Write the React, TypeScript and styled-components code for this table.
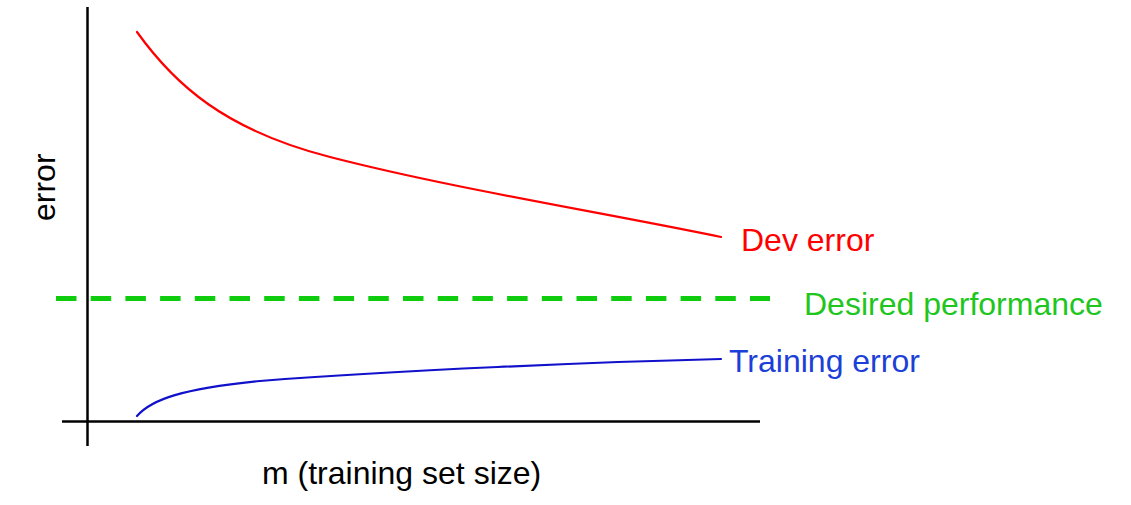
import styled, { createGlobalStyle } from "styled-components";

const GlobalStyle = createGlobalStyle`
  html, body {
    margin: 0;
    padding: 0;
    background: #ffffff;
  }
  body {
    font-family: "Liberation Sans", Arial, sans-serif;
  }
`;

const Page = styled.div`
  width: 1131px;
  height: 505px;
  background: #ffffff;
  overflow: hidden;
`;

const Chart = styled.svg`
  display: block;
  width: 1131px;
  height: 505px;
`;

const Axis = styled.line`
  stroke: #000000;
  stroke-width: 2.5;
`;

const Curve = styled.path<{ tone: string }>`
  fill: none;
  stroke: ${(props) => props.tone};
  stroke-width: 2.2;
  stroke-linecap: round;
`;

const Target = styled.line`
  stroke: #0fcc0f;
  stroke-width: 5;
  stroke-dasharray: 20.5 14.2;
`;

const Label = styled.text<{ tone?: string }>`
  font-family: "Liberation Sans", Arial, Helvetica, sans-serif;
  font-size: 32px;
  fill: ${(props) => props.tone || "#000000"};
`;

// curves traced from the reference, in page pixels
const devPath = "M137 32 C175 85 225 130 330 157 C450 188 600 212 721 237";
const trainPath = "M137 416 C152 399 182 389 260 381 C400 370 600 362 721 359";

const App = () => {
  return (
    <Page>
      <GlobalStyle />
      <Chart viewBox="0 0 1131 505">
        <Axis x1={87.5} y1={7} x2={87.5} y2={446} />
        <Axis x1={62} y1={421.5} x2={760} y2={421.5} />

        <Curve tone="#ff0000" d={devPath} />
        <Target x1={56} y1={298.5} x2={770} y2={298.5} />
        <Curve tone="#1111cc" d={trainPath} />

        <Label tone="#ff0000" x={741} y={251}>
          Dev error
        </Label>
        <Label tone="#1ec61e" x={804} y={315}>
          Desired performance
        </Label>
        <Label tone="#1c3fd8" x={729} y={372}>
          Training error
        </Label>

        <Label x={262} y={484}>
          m (training set size)
        </Label>
        <Label transform="translate(55 221) rotate(-90)">error</Label>
      </Chart>
    </Page>
  );
};

export default App;
